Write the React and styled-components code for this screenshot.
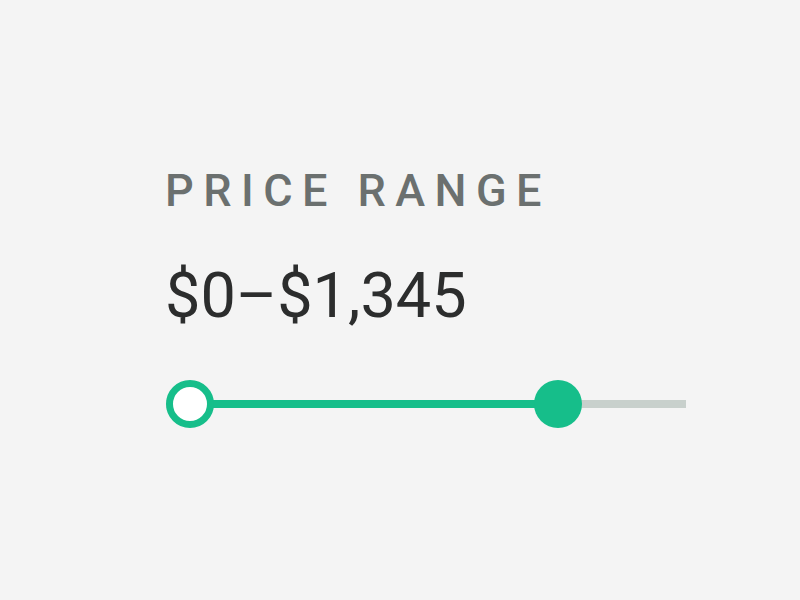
import React from 'react'
import styled, { createGlobalStyle } from 'styled-components'

const GlobalStyle = createGlobalStyle`
  html, body {
    margin: 0;
    padding: 0;
    background: #f4f4f4;
  }
  body {
    font-family: Roboto, "Liberation Sans", sans-serif;
  }
`

const MIN = 0
const MAX = 1700
const low = 0
const high = 1345

function Price({ value }) {
  return '$' + value.toLocaleString('en-US')
}

function App() {
  const thumb = 48
  const span = 520 - thumb
  const lowPos = ((low - MIN) / (MAX - MIN)) * span
  const highPos = 368

  return (
    <Page>
      <GlobalStyle />
      <Panel>
        <Label>Price Range</Label>
        <Value>
          <Price value={low} />–<Price value={high} />
        </Value>
        <Slider>
          <Rail />
          <Fill style={{ left: lowPos + thumb / 2, width: highPos - lowPos }} />
          <Thumb style={{ left: lowPos }} hollow />
          <Thumb style={{ left: highPos }} />
        </Slider>
      </Panel>
    </Page>
  )
}

export default App

const Page = styled.div`
  width: 800px;
  height: 600px;
  background: #f4f4f4;
  display: flex;
`

const Panel = styled.div`
  display: flex;
  flex-direction: column;
  padding: 163px 0 0 165px;
`

const Label = styled.div`
  font-size: 45px;
  font-weight: 500;
  letter-spacing: 0.21em;
  text-transform: uppercase;
  color: #6b706f;
  line-height: 56px;
`

const Value = styled.div`
  margin-top: 41px;
  font-size: 63px;
  font-weight: 400;
  color: #2c2d2d;
  line-height: 72px;
`

const Slider = styled.div`
  position: relative;
  margin-top: 48px;
  margin-left: 1px;
  width: 520px;
  height: 48px;
`

const Rail = styled.div`
  position: absolute;
  left: 0;
  right: 0;
  top: 20px;
  height: 8px;
  background: #c8d0cc;
`

const Fill = styled.div`
  position: absolute;
  top: 20px;
  height: 8px;
  background: #16be8a;
`

const Thumb = styled.div`
  position: absolute;
  top: 0;
  width: 48px;
  height: 48px;
  box-sizing: border-box;
  border-radius: 50%;
  background: ${p => (p.hollow ? '#ffffff' : '#16be8a')};
  border: ${p => (p.hollow ? '7px solid #16be8a' : 'none')};
`
